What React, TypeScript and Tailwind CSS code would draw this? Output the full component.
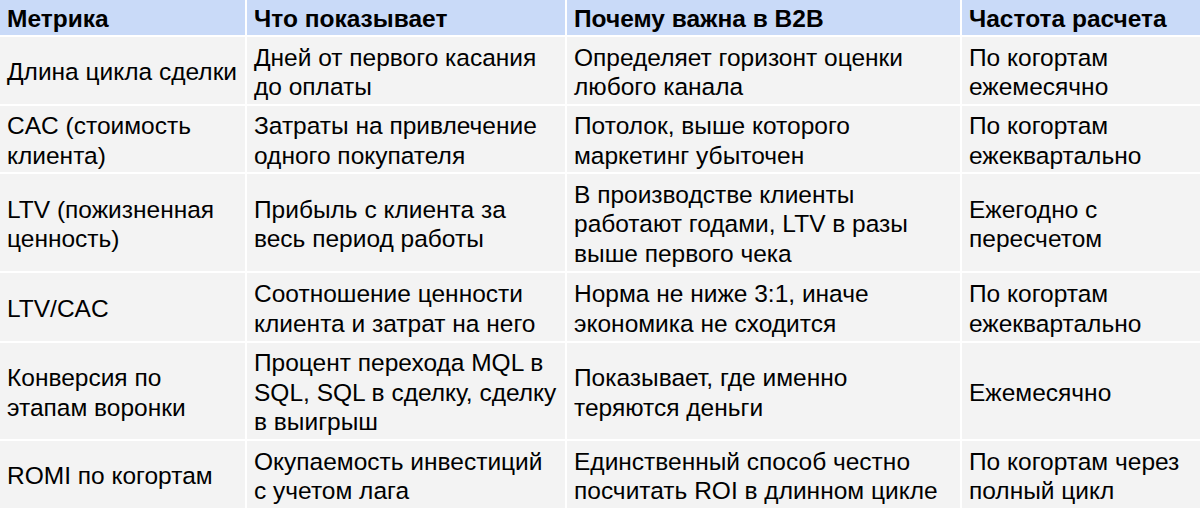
const head = ['Метрика', 'Что показывает', 'Почему важна в B2B', 'Частота расчета'];

// строки заданы по строкам текста, как в исходной таблице
const rows: string[][][] = [
  [['Длина цикла сделки'], ['Дней от первого касания', 'до оплаты'], ['Определяет горизонт оценки', 'любого канала'], ['По когортам', 'ежемесячно']],
  [['CAC (стоимость', 'клиента)'], ['Затраты на привлечение', 'одного покупателя'], ['Потолок, выше которого', 'маркетинг убыточен'], ['По когортам', 'ежеквартально']],
  [['LTV (пожизненная', 'ценность)'], ['Прибыль с клиента за', 'весь период работы'], ['В производстве клиенты', 'работают годами, LTV в разы', 'выше первого чека'], ['Ежегодно с', 'пересчетом']],
  [['LTV/CAC'], ['Соотношение ценности', 'клиента и затрат на него'], ['Норма не ниже 3:1, иначе', 'экономика не сходится'], ['По когортам', 'ежеквартально']],
  [['Конверсия по', 'этапам воронки'], ['Процент перехода MQL в', 'SQL, SQL в сделку, сделку', 'в выигрыш'], ['Показывает, где именно', 'теряются деньги'], ['Ежемесячно']],
  [['ROMI по когортам'], ['Окупаемость инвестиций', 'с учетом лага'], ['Единственный способ честно', 'посчитать ROI в длинном цикле'], ['По когортам через', 'полный цикл']],
];

export default function App() {
  return (
    <div className="w-[1200px] h-[508px] overflow-hidden bg-white font-['Liberation_Sans',Arial,sans-serif] text-[24.5px] leading-[29.5px] text-black">
      <div className="grid grid-cols-[245px_318px_393px_1fr] grid-rows-[35px_67px_66px_97px_68px_96px_67px] gap-[2px] bg-white">
        {head.map((h) => (
          <div key={h} className="flex items-center whitespace-nowrap bg-[#c9daf8] px-[7px] pt-[3px] font-bold">
            {h}
          </div>
        ))}
        {rows.map((r, i) =>
          r.map((c, j) => (
            <div key={i + '-' + j} className="flex flex-col justify-center whitespace-nowrap bg-[#f3f3f3] px-[7px] pt-[3px]">
              {c.map((line) => (
                <span key={line}>{line}</span>
              ))}
            </div>
          ))
        )}
      </div>
    </div>
  );
}
